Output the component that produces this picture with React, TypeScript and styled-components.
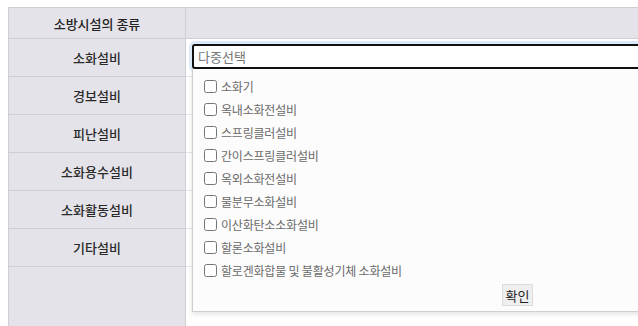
import React from "react";
import styled, { createGlobalStyle } from "styled-components";

const Global = createGlobalStyle`
  html, body { margin: 0; padding: 0; background: #fff; overflow: hidden; }
  body { font-family: "Noto Sans CJK KR", "Noto Sans", sans-serif; }
`;

const Page = styled.div`
  padding: 7px 0 0 8px;
  width: 760px;
`;

const Table = styled.div`
  display: grid;
  grid-template-columns: 177px 1fr;
  border-top: 1px solid #cfcfd3;
  border-left: 1px solid #cfcfd3;
`;

const HeadCell = styled.div`
  background: #e4e3e9;
  height: 30px;
  border-right: 1px solid #cfcfd3;
  border-bottom: 1px solid #cfcfd3;
  display: flex;
  align-items: center;
  justify-content: center;
  font-size: 13px;
  font-weight: 500;
  color: #222;
`;

const LabelCell = styled.div<{ $tall?: boolean }>`
  background: #e4e3e9;
  height: ${(p) => (p.$tall ? "80px" : "37px")};
  border-right: 1px solid #cfcfd3;
  border-bottom: 1px solid #cfcfd3;
  display: flex;
  align-items: center;
  justify-content: center;
  font-size: 13px;
  font-weight: 500;
  color: #2a2a2a;
`;

const ValueCell = styled.div`
  background: #fff;
  border-bottom: 1px solid #e8e8ec;
  position: relative;
  padding: 5px 0 0 6px;
`;

const Select = styled.div`
  position: relative;
  width: 651px;
  z-index: 5;
`;

const Input = styled.div`
  height: 21px;
  border: 2px solid #111;
  border-radius: 3px;
  box-shadow: 0 0 0 3px #dbe9f8;
  padding: 0 4px;
  display: flex;
  align-items: center;
  font-size: 13px;
  color: #757575;
  background: #fff;
`;

const Panel = styled.div`
  position: absolute;
  left: 0;
  top: 100%;
  width: 100%;
  box-sizing: border-box;
  background: #fcfcfc;
  border: 1px solid #cfcfcf;
  border-top: none;
  box-shadow: 0 2px 5px rgba(0, 0, 0, 0.12);
  padding: 6px 0 5px 0;
`;

const Item = styled.label`
  display: flex;
  align-items: center;
  height: 23px;
  padding-left: 10px;
  font-size: 12px;
  letter-spacing: -0.2px;
  color: #6a6a6a;
`;

const Box = styled.input`
  width: 13px;
  height: 13px;
  margin: 0 4px 0 1px;
  accent-color: #666;
`;

const Footer = styled.div`
  display: flex;
  justify-content: center;
  padding-top: 2px;
`;

const Button = styled.button`
  height: 22px;
  width: 31px;
  padding: 0;
  background: #efefef;
  border: 1px solid #dcdcdc;
  font-family: inherit;
  font-size: 13px;
  color: #222;
`;

const rows = ["소화설비", "경보설비", "피난설비", "소화용수설비", "소화활동설비", "기타설비"];
const options = [
  "소화기",
  "옥내소화전설비",
  "스프링클러설비",
  "간이스프링클러설비",
  "옥외소화전설비",
  "물분무소화설비",
  "이산화탄소소화설비",
  "할론소화설비",
  "할로겐화합물 및 불활성기체 소화설비",
];

export default function App() {
  return (
    <>
      <Global />
      <Page>
        <Table>
          <HeadCell>소방시설의 종류</HeadCell>
          <HeadCell />
          {rows.map((r, i) => (
            <React.Fragment key={r}>
              <LabelCell>{r}</LabelCell>
              <ValueCell>
                {i === 0 && (
                  <Select>
                    <Input>다중선택</Input>
                    <Panel>
                      {options.map((o) => (
                        <Item key={o}>
                          <Box type="checkbox" />
                          {o}
                        </Item>
                      ))}
                      <Footer>
                        <Button>확인</Button>
                      </Footer>
                    </Panel>
                  </Select>
                )}
              </ValueCell>
            </React.Fragment>
          ))}
          <LabelCell $tall />
          <ValueCell />
        </Table>
      </Page>
    </>
  );
}
